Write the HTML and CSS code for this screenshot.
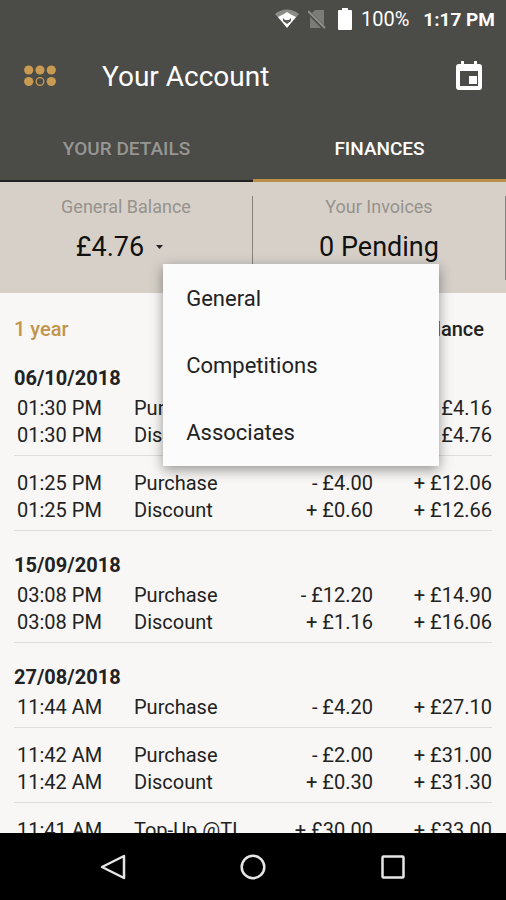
FILE: index.html
```html
<!DOCTYPE html>
<html lang="en">

<head>
  <meta charset="UTF-8">
  <meta name="viewport" content="width=device-width, initial-scale=1.0">
  <title>Your Account</title>
  <link rel="stylesheet" href="styles.css">
</head>

<body>
  <header class="header">
    <div class="status-bar">
      <svg class="status-wifi" width="24" height="20" viewBox="0 0 24 20">
        <path d="M0 5C7-1 17-1 24 5L19 11C14 7 10 7 5 11Z" fill="#8b8b88" />
        <path d="M3 8Q7 6 9 5L12 3L15 5Q17 6 21 8L12 19Z" fill="#fff" />
        <path d="M8 9L10 11H14L16 9V12L12 15L8 12Z" fill="#5b5b57" />
      </svg>
      <svg class="status-sim" width="18" height="20" viewBox="0 0 18 20">
        <path d="M7 1H16V19H2V6Z" fill="#7b7b78" />
        <path d="M0 3L17 20" stroke="#4b4b47" stroke-width="4" />
        <path d="M0 2L17 19" stroke="#8e8e8b" stroke-width="2" />
      </svg>
      <svg class="status-battery" width="14" height="22" viewBox="0 0 14 22">
        <path d="M4 0H10V2H13Q14 2 14 3V21Q14 22 13 22H1Q0 22 0 21V3Q0 2 1 2H4Z" fill="#fff" />
      </svg>
      <span class="battery-level">100%</span>
      <span class="clock">1:17 PM</span>
    </div>

    <div class="app-bar">
      <button class="icon-btn" aria-label="Menu">
        <svg width="32" height="22" viewBox="0 0 32 22" fill="#c99b52">
          <circle cx="4.700" cy="5" r="4.600" />
          <circle cx="16" cy="5" r="4.600" />
          <circle cx="27.300" cy="5" r="4.600" />
          <circle cx="4.700" cy="16.500" r="4.600" />
          <circle cx="16" cy="16.500" r="3.800" fill="none" stroke="#c99b52" stroke-width="1.300" />
          <circle cx="27.300" cy="16.500" r="4.600" />
        </svg>
      </button>
      <h1>Your Account</h1>
      <button class="icon-btn" aria-label="Calendar">
        <svg width="26" height="30" viewBox="0 0 26 30">
          <path fill="#fff" fill-rule="evenodd" d="M3 3H5V0H8V3H18V0H21V3H23Q26 3 26 6V26Q26 29 23 29H3Q0 29 0 26V6Q0 3 3 3ZM4 10V25H22V10Z" />
          <rect x="13" y="15" width="8" height="8" fill="#fff" />
        </svg>
      </button>
    </div>

    <nav class="tabs">
      <a href="#">YOUR DETAILS</a>
      <a href="#" class="active">FINANCES</a>
    </nav>
  </header>

  <section class="summary">
    <div class="card">
      <span class="card-label">General Balance</span>
      <div class="dropdown">
        <button class="dropdown-toggle" aria-haspopup="true" aria-expanded="true">
          £4.76
          <svg width="7" height="4" viewBox="0 0 7 4">
            <path d="M0 0H7L3.500 4Z" fill="#222" />
          </svg>
        </button>
        <div class="dropdown-menu">
          <button>General</button>
          <button>Competitions</button>
          <button>Associates</button>
        </div>
      </div>
    </div>
    <div class="card">
      <span class="card-label">Your Invoices</span>
      <span class="card-value">0 Pending</span>
    </div>
  </section>

  <main class="content">
    <table class="transactions">
      <colgroup>
        <col class="col-time">
        <col class="col-type">
        <col class="col-amount">
        <col class="col-balance">
      </colgroup>
      <thead>
        <tr>
          <td colspan="3"><button class="period">1 year</button></td>
          <th>Balance</th>
        </tr>
      </thead>

      <tbody class="entry">
        <tr class="date"><th colspan="4">06/10/2018</th></tr>
        <tr><td>01:30 PM</td><td>Purchase</td><td>- £8.50</td><td>+ £4.16</td></tr>
        <tr><td>01:30 PM</td><td>Discount</td><td>+ £0.60</td><td>+ £4.76</td></tr>
      </tbody>
      <tbody class="entry">
        <tr><td>01:25 PM</td><td>Purchase</td><td>- £4.00</td><td>+ £12.06</td></tr>
        <tr><td>01:25 PM</td><td>Discount</td><td>+ £0.60</td><td>+ £12.66</td></tr>
      </tbody>

      <tbody class="entry">
        <tr class="date"><th colspan="4">15/09/2018</th></tr>
        <tr><td>03:08 PM</td><td>Purchase</td><td>- £12.20</td><td>+ £14.90</td></tr>
        <tr><td>03:08 PM</td><td>Discount</td><td>+ £1.16</td><td>+ £16.06</td></tr>
      </tbody>

      <tbody class="entry">
        <tr class="date"><th colspan="4">27/08/2018</th></tr>
        <tr><td>11:44 AM</td><td>Purchase</td><td>- £4.20</td><td>+ £27.10</td></tr>
      </tbody>
      <tbody class="entry">
        <tr><td>11:42 AM</td><td>Purchase</td><td>- £2.00</td><td>+ £31.00</td></tr>
        <tr><td>11:42 AM</td><td>Discount</td><td>+ £0.30</td><td>+ £31.30</td></tr>
      </tbody>
      <tbody class="entry">
        <tr><td>11:41 AM</td><td>Top-Up @TL</td><td>+ £30.00</td><td>+ £33.00</td></tr>
      </tbody>
    </table>
  </main>

  <footer class="nav-bar">
    <button aria-label="Back">
      <svg width="26" height="28" viewBox="0 0 26 28">
        <path d="M2 14L24 3V25Z" fill="none" stroke="#e6e6e6" stroke-width="2.500" stroke-linejoin="round" />
      </svg>
    </button>
    <button aria-label="Home">
      <svg width="28" height="28" viewBox="0 0 28 28">
        <circle cx="14" cy="14" r="11.300" fill="none" stroke="#e6e6e6" stroke-width="2.500" />
      </svg>
    </button>
    <button aria-label="Recent apps">
      <svg width="28" height="28" viewBox="0 0 28 28">
        <rect x="3.500" y="3.500" width="21" height="21" rx="1" fill="none" stroke="#e6e6e6" stroke-width="2.500" />
      </svg>
    </button>
  </footer>
</body>

</html>
```

FILE: styles.css
```css
* {
  box-sizing: border-box;
  margin: 0;
  padding: 0;
}

body {
  display: flex;
  flex-direction: column;
  height: 100vh;
  overflow: hidden;
  background-color: #f8f7f5;
  color: #222;
  font-family: Roboto, sans-serif;
  font-size: 20px;
}

button {
  border: none;
  background: none;
  color: inherit;
  font: inherit;
  cursor: pointer;
}

svg {
  display: block;
}

/* Header */
.header {
  background-color: #4b4b47;
  color: white;
}

.status-bar {
  display: flex;
  align-items: center;
  justify-content: flex-end;
  height: 38px;
  padding-right: 11px;
}

.status-sim {
  margin-left: 9px;
}

.status-battery {
  margin: 0 9px 0 12px;
}

.clock {
  margin-left: 14px;
  font-size: 19px;
  font-weight: 700;
}

.app-bar {
  display: flex;
  align-items: center;
  height: 76px;
  padding: 0 24px;
}

.app-bar h1 {
  flex: 1;
  padding-left: 46px;
  font-size: 28px;
  font-weight: 400;
}

.tabs {
  display: flex;
}

.tabs a {
  flex: 1;
  height: 68px;
  border-bottom: 2px solid #222;
  color: #969693;
  font-size: 19px;
  font-weight: 500;
  line-height: 70px;
  text-align: center;
  text-decoration: none;
}

.tabs a.active {
  border-bottom: 3px solid #bd904a;
  color: white;
}

/* Balance and invoices */
.summary {
  display: flex;
  padding: 14px 0 13px;
  background-color: #d6d0c9;
}

.card {
  display: flex;
  flex: 1;
  flex-direction: column;
  align-items: center;
  height: 84px;
  border-right: 1px solid #85817c;
}

.card-label {
  margin-bottom: 12px;
  color: #96928c;
  font-size: 18px;
  line-height: 22px;
}

.card-value,
.dropdown-toggle {
  color: #111;
  font-size: 27px;
  line-height: 34px;
}

.dropdown {
  position: relative;
  margin-right: 13px;
}

.dropdown-toggle {
  display: flex;
  align-items: center;
  gap: 12px;
}

.dropdown-menu {
  position: absolute;
  top: 100%;
  left: 100%;
  z-index: 1;
  width: 276px;
  padding-top: 1px;
  background-color: #fbfbfb;
  box-shadow: 0 4px 12px rgba(0, 0, 0, 0.4);
}

.dropdown-menu button {
  display: block;
  width: 100%;
  height: 67px;
  padding: 0 23px;
  font-size: 22px;
  text-align: left;
}

/* Transactions */
.content {
  flex: 1;
  overflow: hidden;
  padding: 0 14px;
}

.transactions {
  width: 100%;
  border-collapse: collapse;
  table-layout: fixed;
  line-height: 27px;
}

.col-time {
  width: 120px;
}

.col-amount,
.col-balance {
  width: 119px;
}

.transactions thead tr {
  height: 68px;
}

.transactions thead td,
.transactions thead th {
  padding-top: 5px;
}

.transactions thead th {
  padding-right: 8px;
  font-weight: 500;
  text-align: right;
}

.period {
  color: #c1954c;
  font-weight: 500;
}

.entry {
  border-bottom: 1px solid #dededc;
}

.entry td {
  white-space: nowrap;
}

.entry td:first-child {
  padding-left: 3px;
}

.entry td:nth-child(n+3) {
  text-align: right;
}

.entry tr:first-child td {
  padding-top: 14px;
}

.entry tr:last-child td {
  padding-bottom: 6px;
}

.date th {
  font-weight: 700;
  line-height: 34px;
  text-align: left;
}

.entry + .entry .date th {
  padding-top: 17px;
}

/* Bottom navigation */
.nav-bar {
  display: flex;
  height: 67px;
  padding: 0 43px;
  background-color: black;
}

.nav-bar button {
  display: flex;
  flex: 1;
  align-items: center;
  justify-content: center;
}
```
